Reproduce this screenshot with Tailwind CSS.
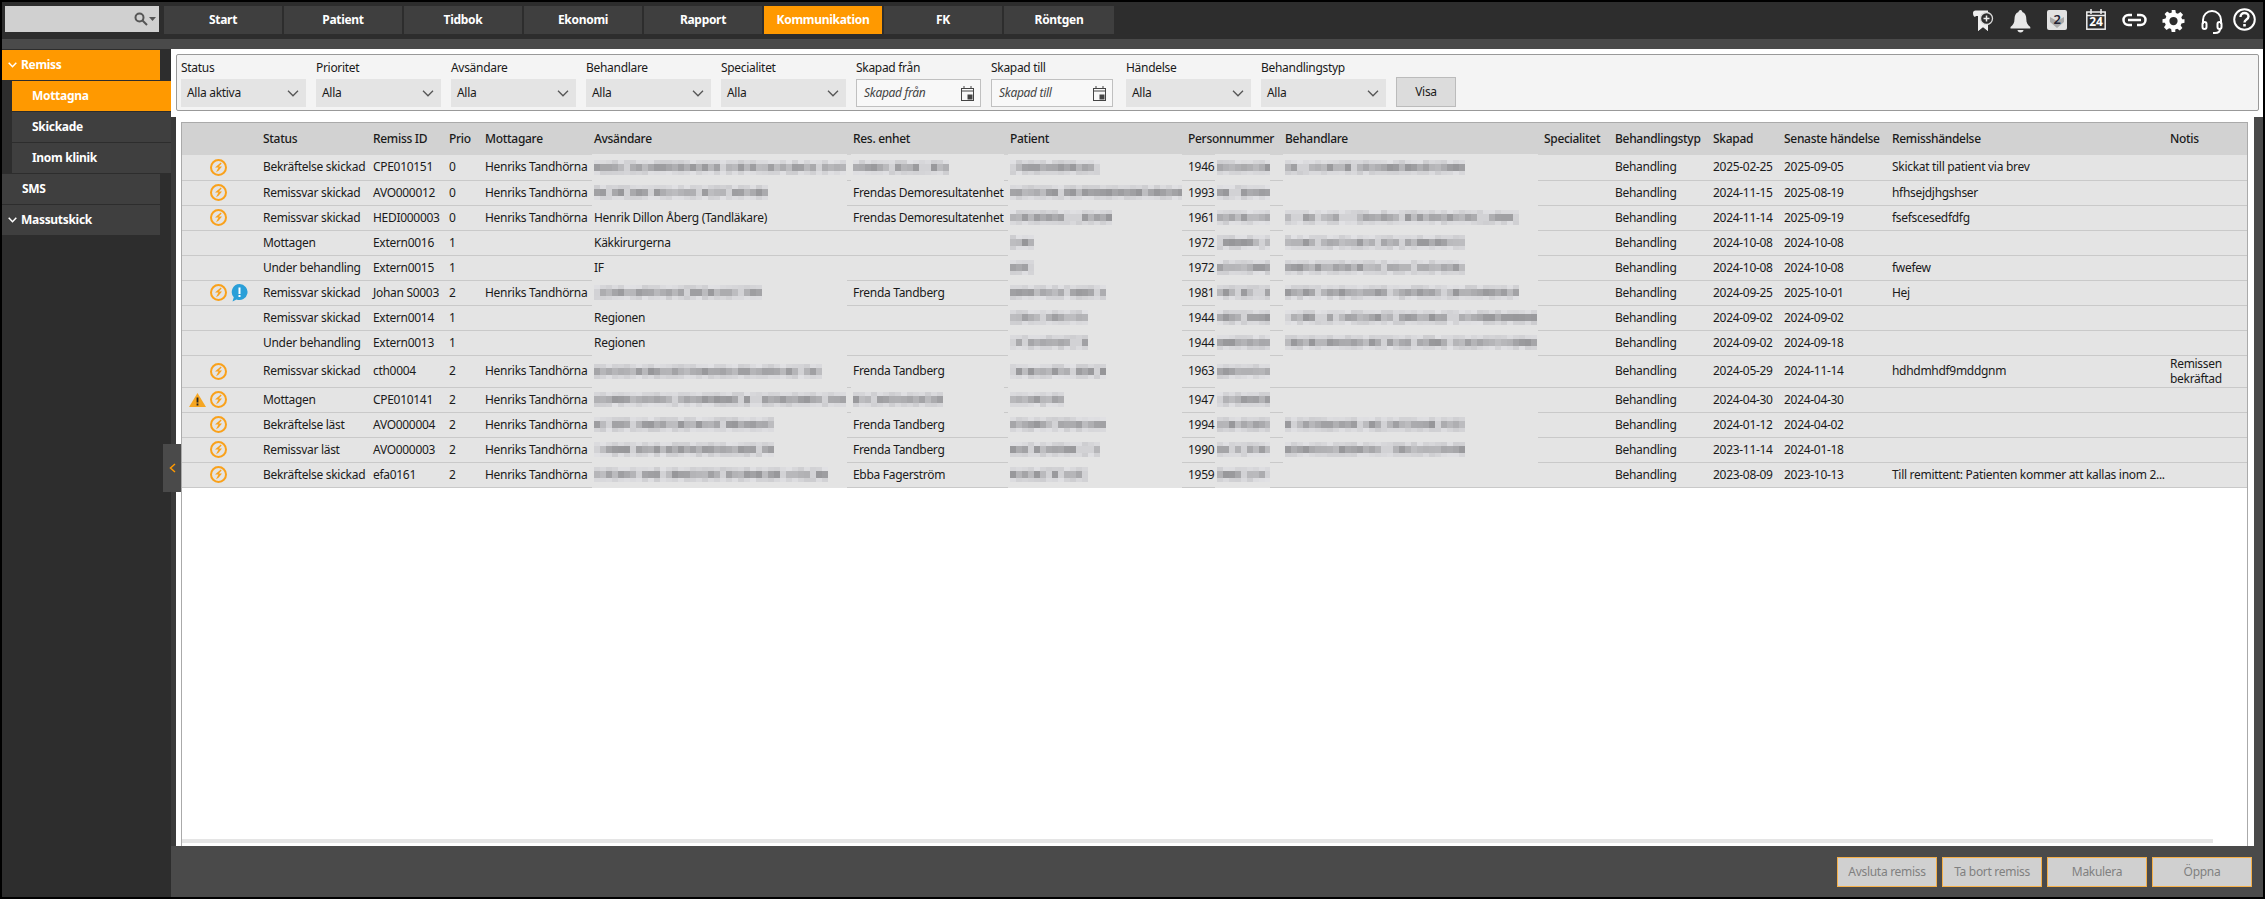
<!DOCTYPE html>
<html lang="sv">

<head>
    <meta charset="UTF-8">
    <title>Remiss - Mottagna</title>
    <script src="https://cdn.jsdelivr.net/npm/@tailwindcss/browser@4"></script>
</head>

<body class="bg-black overflow-hidden">
    <div class="relative h-screen flex flex-col p-[2px] font-['Noto_Sans',sans-serif] text-[12px] tracking-[-0.3px] text-[#1a1a1a]">

        <!-- Top bar -->
        <header class="h-[37px] shrink-0 bg-[#2d2d2d] flex items-start pt-[4px] pl-[3px]">
            <div class="w-[154px] h-[26px] bg-[#d0d0d0] flex items-center justify-end pr-[3px] gap-[1px]">
                <svg width="14" height="14" viewBox="0 0 14 14" fill="none" stroke="#555" stroke-width="2"><circle cx="5.5" cy="5.5" r="4"/><path d="M8.5 8.5l4.5 4.5"/></svg>
                <svg width="7" height="4" viewBox="0 0 7 4" fill="#555"><path d="M0 0h7L3.5 4z"/></svg>
            </div>
            <nav class="flex gap-[2px] ml-[5px] font-bold text-white">
                <a class="w-[118px] h-[28px] bg-[#3f3f3f] flex items-center justify-center">Start</a>
                <a class="w-[118px] h-[28px] bg-[#3f3f3f] flex items-center justify-center">Patient</a>
                <a class="w-[118px] h-[28px] bg-[#3f3f3f] flex items-center justify-center">Tidbok</a>
                <a class="w-[118px] h-[28px] bg-[#3f3f3f] flex items-center justify-center">Ekonomi</a>
                <a class="w-[118px] h-[28px] bg-[#3f3f3f] flex items-center justify-center">Rapport</a>
                <a class="w-[118px] h-[28px] bg-[#ff9900] flex items-center justify-center">Kommunikation</a>
                <a class="w-[118px] h-[28px] bg-[#3f3f3f] flex items-center justify-center">FK</a>
                <a class="w-[110px] h-[28px] bg-[#3f3f3f] flex items-center justify-center">Röntgen</a>
            </nav>
            <!-- Tool icons -->
            <div class="ml-auto flex items-start pr-[7px] text-white">
                <svg class="mt-[4px]" width="21" height="21" viewBox="0 0 21 21"><path d="M0 3c0-1.500 1-2.500 2.500-2.500H15V6H5V21l5-4 5 4V14H5V6H2.500v1C1 7 0 5.500 0 3z" fill="#eee"/><path d="M5 5h10v16l-5-4-5 4z" fill="#eee"/><circle cx="13.500" cy="8.500" r="6" fill="#2d2d2d" stroke="#ddd" stroke-width="1.300"/><path d="M13.500 5.500v6M10.500 8.500h6" stroke="#eee" stroke-width="1.500"/></svg>
                <svg class="ml-[16px] mt-[3px]" width="21" height="24" viewBox="0 0 21 24" fill="#e8e8e8"><path d="M10.5 1c1.2 0 1.8 1 1.8 2 3 1 4 4 4 7 0 4 1.500 6 4 8v1.500H.5V18c2.500-2 4-4 4-8 0-3 1-6 4-7 0-1 .8-2 2-2z"/><path d="M7.500 21h6c0 1.500-1.300 2.500-3 2.500s-3-1-3-2.500z"/></svg>
                <div class="relative ml-[16px] mt-[4px] w-[20px] h-[20px] rounded-[2px] bg-[#e2e2e2] flex items-center justify-center text-[13px] font-semibold text-[#223]">
                    <svg class="absolute inset-0" width="20" height="20" viewBox="0 0 20 20" fill="#aaa"><path d="M3 7l7 4 7-4v5l-7 6-7-6z"/></svg>
                    <span class="relative">2</span>
                </div>
                <div class="ml-[19px] mt-[3px] w-[20px] h-[21px] relative">
                    <svg class="absolute inset-0" width="20" height="21" viewBox="0 0 20 21" fill="none" stroke="#eee" stroke-width="1.5"><rect x=".8" y="3" width="18.400" height="17.200"/><path d="M5 0v5M15 0v5M1 6.500h18" /></svg>
                    <span class="absolute inset-x-0 top-[7px] text-center text-[12px] leading-[12px] font-bold text-white tracking-normal">24</span>
                </div>
                <svg class="ml-[15px] mt-[7px]" width="27" height="14" viewBox="0 0 27 14" fill="none" stroke="#fff" stroke-width="2.500"><path d="M11 2H7.500a5 5 0 0 0 0 10H11M16 2h3.500a5 5 0 0 1 0 10H16"/><path d="M7 7h13"/></svg>
                <svg class="ml-[14px] mt-[4px]" width="23" height="22" viewBox="0 0 24 24" fill="#fff"><path fill-rule="evenodd" d="M10 0h4l.6 3.300 2.200.9 2.800-1.900 2.800 2.800-1.900 2.800.9 2.200L24 10v4l-3.300.6-.9 2.200 1.900 2.800-2.800 2.800-2.800-1.900-2.200.9L14 24h-4l-.6-3.300-2.200-.9-2.800 1.900-2.800-2.800 1.900-2.800-.9-2.200L0 14v-4l3.300-.6.9-2.200-1.900-2.800 2.800-2.800 2.800 1.900 2.200-.9zM12 7.500a4.500 4.500 0 1 0 0 9 4.500 4.500 0 0 0 0-9z"/></svg>
                <svg class="ml-[16px] mt-[4px]" width="22" height="24" viewBox="0 0 22 24" fill="none" stroke="#fff" stroke-width="2"><path d="M2 14V10a9 9 0 0 1 18 0v4"/><rect x="1.500" y="12" width="4" height="7" rx="2"/><rect x="16.500" y="12" width="4" height="7" rx="2"/><path d="M19 19c0 3-2 4-5 4h-2"/></svg>
                <svg class="ml-[10px] mt-[2px]" width="23" height="23" viewBox="0 0 23 23" fill="none" stroke="#fff" stroke-width="2"><circle cx="11.500" cy="11.500" r="10.300"/><path d="M7.500 9c0-2.500 1.800-4 4-4s4 1.500 4 3.500c0 3-4 3-4 6" stroke-width="2.400"/><path d="M11.500 16v2.500" stroke-width="2.600"/></svg>
            </div>
        </header>
        <div class="h-[10px] shrink-0 bg-[#4a4a4a]"></div>

        <div class="flex flex-1 min-h-0">
            <!-- Sidebar -->
            <aside class="w-[169px] shrink-0 bg-[#2d2d2d] pt-[1px] flex flex-col gap-[1px] font-bold text-white">
                <div class="w-[158px] h-[30px] bg-[#ff9900] flex items-center">
                    <svg class="ml-[6px] mr-[4px]" width="9" height="6" viewBox="0 0 9 6" fill="none" stroke="#fff" stroke-width="1.500"><path d="M.7.7l3.800 4 3.800-4"/></svg>Remiss
                </div>
                <div class="ml-[10px] h-[30px] bg-[#ff9900] flex items-center pl-[20px]">Mottagna</div>
                <div class="ml-[10px] h-[30px] bg-[#3f3f3f] flex items-center pl-[20px]">Skickade</div>
                <div class="ml-[10px] h-[30px] bg-[#3f3f3f] flex items-center pl-[20px]">Inom klinik</div>
                <div class="w-[158px] h-[30px] bg-[#3f3f3f] flex items-center pl-[20px]">SMS</div>
                <div class="w-[158px] h-[30px] bg-[#3f3f3f] flex items-center">
                    <svg class="ml-[6px] mr-[4px]" width="9" height="6" viewBox="0 0 9 6" fill="none" stroke="#fff" stroke-width="1.500"><path d="M.7.7l3.800 4 3.800-4"/></svg>Massutskick
                </div>
            </aside>

            <main class="relative flex-1 min-w-0 flex flex-col">
                <!-- Filters -->
                <div class="h-[68px] shrink-0 bg-white pt-[5px] pl-[5px] pr-[4px]">
                    <div id="filters" class="h-[57px] border border-[#999] rounded-[2px] bg-[#f4f4f4] flex pl-[4px] pt-[6px]"></div>
                </div>

                <!-- Table area -->
                <div class="flex flex-1 min-h-0">
                    <div class="w-[5px] shrink-0 bg-[#3a3a3a]"></div>
                    <div class="flex-1 min-w-0 bg-white pt-[5px] pl-[5px] pr-[6px]">
                        <div class="h-full border-x border-t border-[#aaa] flex flex-col">
                            <div class="flex-1 min-h-0">
                                <table class="w-full table-fixed border-collapse">
                                    <colgroup>
                                        <col class="w-[78px]"><col class="w-[110px]"><col class="w-[76px]"><col class="w-[36px]">
                                        <col class="w-[109px]"><col class="w-[259px]"><col class="w-[157px]"><col class="w-[178px]">
                                        <col class="w-[97px]"><col class="w-[259px]"><col class="w-[71px]"><col class="w-[98px]">
                                        <col class="w-[71px]"><col class="w-[108px]"><col class="w-[278px]"><col>
                                    </colgroup>
                                    <thead class="bg-[#d2d2d2]">
                                        <tr class="h-[32px] text-left font-medium">
                                            <th class="font-medium"></th>
                                            <th class="font-medium pl-[3px]">Status</th>
                                            <th class="font-medium pl-[3px]">Remiss ID</th>
                                            <th class="font-medium pl-[3px]">Prio</th>
                                            <th class="font-medium pl-[3px]">Mottagare</th>
                                            <th class="font-medium pl-[3px]">Avsändare</th>
                                            <th class="font-medium pl-[3px]">Res. enhet</th>
                                            <th class="font-medium pl-[3px]">Patient</th>
                                            <th class="font-medium pl-[3px]">Personnummer</th>
                                            <th class="font-medium pl-[3px]">Behandlare</th>
                                            <th class="font-medium pl-[3px]">Specialitet</th>
                                            <th class="font-medium pl-[3px]">Behandlingstyp</th>
                                            <th class="font-medium pl-[3px]">Skapad</th>
                                            <th class="font-medium pl-[3px]">Senaste händelse</th>
                                            <th class="font-medium pl-[3px]">Remisshändelse</th>
                                            <th class="font-medium pl-[3px]">Notis</th>
                                        </tr>
                                    </thead>
                                    <tbody id="rows"></tbody>
                                </table>
                            </div>
                            <div class="h-[4px] w-[2031px] mb-[3px] shrink-0 bg-[#e5e5e5]"></div>
                        </div>
                    </div>
                    <div class="w-[9px] shrink-0 bg-[#4a4a4a]"></div>
                </div>

                <!-- Actions -->
                <footer class="h-[51px] shrink-0 bg-[#4a4a4a] flex justify-end gap-[5px] pt-[11px] pr-[11px] text-[#808080]">
                    <button class="w-[100px] h-[30px] bg-[#d0d0d0] border border-[#f5b04a]">Avsluta remiss</button>
                    <button class="w-[100px] h-[30px] bg-[#d0d0d0] border border-[#f5b04a]">Ta bort remiss</button>
                    <button class="w-[100px] h-[30px] bg-[#d0d0d0] border border-[#f5b04a]">Makulera</button>
                    <button class="w-[100px] h-[30px] bg-[#d0d0d0] border border-[#f5b04a]">Öppna</button>
                </footer>

                <!-- Collapse handle -->
                <div class="absolute left-[-8px] top-[395px] w-[18px] h-[48px] bg-[#4a4a4a] flex items-center justify-center">
                    <svg width="7" height="10" viewBox="0 0 7 10" fill="none" stroke="#ff9900" stroke-width="1.500"><path d="M6 1L1.500 5 6 9"/></svg>
                </div>
            </main>
        </div>
    </div>

    <script>
        const chevron = '<svg width="12" height="7" viewBox="0 0 12 7" fill="none" stroke="#555" stroke-width="1.300"><path d="M1 .8l5 5 5-5"/></svg>';
        const calendar = '<svg width="13" height="15" viewBox="0 0 13 15" fill="none" stroke="#444"><rect x=".5" y="2.500" width="12" height="12"/><path d="M3 0v3M10 0v3M0 5h13" /><rect x="7" y="9" width="4" height="4" fill="#444"/></svg>';

        // Filter bar
        const filters = [
            ['Status', 'Alla aktiva', 125, 10], ['Prioritet', 'Alla', 125, 10], ['Avsändare', 'Alla', 125, 10],
            ['Behandlare', 'Alla', 125, 10], ['Specialitet', 'Alla', 125, 10], ['Skapad från', '', 125, 10],
            ['Skapad till', '', 122, 13], ['Händelse', 'Alla', 125, 10], ['Behandlingstyp', 'Alla', 125, 10]
        ];
        document.getElementById('filters').innerHTML = filters.map(([label, value, width, gap]) => {
            const box = value
                ? `<div class="h-[28px] bg-[#e4e4e4] flex items-center justify-between pl-[6px] pr-[7px]">${value}${chevron}</div>`
                : `<div class="h-[28px] bg-[#f8f8f8] border border-[#c0c0c0] flex items-center justify-between pl-[7px] pr-[6px] italic text-[#444]">${label}${calendar}</div>`;
            return `<div class="shrink-0" style="width:${width}px;margin-right:${gap}px"><div class="h-[18px] leading-[14px]">${label}</div>${box}</div>`;
        }).join('') + '<button class="w-[60px] h-[30px] mt-[16px] bg-[#dcdcdc] border border-[#bbb]">Visa</button>';

        // Pixelated patch for the hidden personal data
        let seed = 7;
        function noise() {
            seed = (seed * 9301 + 49297) % 233280;
            noise.last = seed / 233280;
            return Math.abs(Math.sin(seed * 12.9898) * 43758.5453) % 1;
        }
        function mosaic(width) {
            let cells = '';
            const n = Math.ceil(width / 6);
            for (let i = 0; i < n; i++) {
                const gap = noise() < 0.12;
                const mid = gap ? 210 : 150 + noise() * 40;
                const top = 205 + noise() * 20;
                const bottom = 205 + noise() * 20;
                [[0, 4, top], [4, 7, mid], [11, 4, bottom]].forEach(([y, h, g]) => {
                    const c = Math.round(g);
                    cells += `<rect x="${i * 6}" y="${y}" width="6" height="${h}" fill="rgb(${c},${c},${c + 3})"/>`;
                });
            }
            return `<svg class="block" width="${n * 6}" height="15">${cells}</svg>`;
        }
        // patch keeps the cell colour over the row line, like the original
        function hidden(width, left, right) {
            return `<div class="absolute inset-y-[-1px] bg-[#e4e4e4] flex items-center z-10" style="left:${left}px;right:${right}px;padding-left:2px">${mosaic(width)}</div>`;
        }

        const bolt = '<svg class="block shrink-0" width="17" height="17" viewBox="0 0 17 17"><circle cx="8.500" cy="8.500" r="7.500" fill="none" stroke="#f9a11b" stroke-width="2"/><path d="M10.800 3.500L5 8.500h3.500L6 13.200l2.500-1.500 3.500-4.200H8.800l2.800-3z" fill="#f9a11b"/></svg>';
        const note = '<svg class="block shrink-0" width="17" height="18" viewBox="0 0 17 18"><path d="M8.500 0a8 8 0 1 1-3 15.400L1.500 17.500l1.300-4.200A8 8 0 0 1 8.500 0z" fill="#2a9fd8"/><path d="M8.500 3.500v6.500M8.500 11v2" stroke="#fff" stroke-width="2"/></svg>';
        const warn = '<svg class="block shrink-0" width="17" height="14" viewBox="0 0 17 14"><path d="M8.500 0L17 14H0z" fill="#f5a623"/><path d="M8.500 4.500v5M8.500 10.500v2" stroke="#222" stroke-width="1.800"/></svg>';

        // status, id, prio, mottagare, avsändare, enhet, patient, pnr, behandlare, skapad, senaste, händelse, notis, flags
        // a number means a pixelated patch of that width
        const H = 'Henriks Tandhörna', FD = 'Frendas Demoresultatenhet', FT = 'Frenda Tandberg';
        const data = [
            ['Bekräftelse skickad', 'CPE010151', '0', H, 250, 91, 85, '1946', 178, '2025-02-25', '2025-09-05', 'Skickat till patient via brev', '', 'b'],
            ['Remissvar skickad', 'AVO000012', '0', H, 174, FD, 170, '1993', 0, '2024-11-15', '2025-08-19', 'hfhsejdjhgshser', '', 'b'],
            ['Remissvar skickad', 'HEDI000003', '0', H, 'Henrik Dillon Åberg (Tandläkare)', FD, 100, '1961', 230, '2024-11-14', '2025-09-19', 'fsefscesedfdfg', '', 'b'],
            ['Mottagen', 'Extern0016', '1', '', 'Käkkirurgerna', '', 20, '1972', 175, '2024-10-08', '2024-10-08', '', '', ''],
            ['Under behandling', 'Extern0015', '1', '', 'IF', '', 20, '1972', 175, '2024-10-08', '2024-10-08', 'fwefew', '', ''],
            ['Remissvar skickad', 'Johan S0003', '2', H, 164, FT, 96, '1981', 230, '2024-09-25', '2025-10-01', 'Hej', '', 'bn'],
            ['Remissvar skickad', 'Extern0014', '1', '', 'Regionen', '', 75, '1944', 250, '2024-09-02', '2024-09-02', '', '', ''],
            ['Under behandling', 'Extern0013', '1', '', 'Regionen', '', 75, '1944', 250, '2024-09-02', '2024-09-18', '', '', ''],
            ['Remissvar skickad', 'cth0004', '2', H, 225, FT, 96, '1963', 0, '2024-05-29', '2024-11-14', 'hdhdmhdf9mddgnm', 'Remissen bekräftad', 'b'],
            ['Mottagen', 'CPE010141', '2', H, 250, 90, 50, '1947', 0, '2024-04-30', '2024-04-30', '', '', 'wb'],
            ['Bekräftelse läst', 'AVO000004', '2', H, 175, FT, 96, '1994', 175, '2024-01-12', '2024-04-02', '', '', 'b'],
            ['Remissvar läst', 'AVO000003', '2', H, 175, FT, 85, '1990', 175, '2023-11-14', '2024-01-18', '', '', 'b'],
            ['Bekräftelse skickad', 'efa0161', '2', H, 230, 'Ebba Fagerström', 75, '1959', 0, '2023-08-09', '2023-10-13', 'Till remittent: Patienten kommer att kallas inom 2...', '', 'b']
        ];

        function cell(value) {
            return typeof value === 'number'
                ? `<td class="relative">${value ? hidden(value, 1, 3) : ''}</td>`
                : `<td class="pl-[3px] whitespace-nowrap overflow-hidden">${value}</td>`;
        }

        document.getElementById('rows').innerHTML = data.map((r) => {
            const [status, id, prio, to, from, unit, patient, pnr, vet, created, last, event, notis, flags] = r;
            const icons = `<div class="flex items-center h-full relative">
                <div class="w-[18px] ml-[6px] flex justify-center">${flags.includes('w') ? warn : ''}</div>
                <div class="w-[17px] ml-[4px]">${flags.includes('b') ? bolt : ''}</div>
                <div class="w-[17px] ml-[4px]">${flags.includes('n') ? note : ''}</div>
            </div>`;
            const tall = notis ? 'h-[32px]' : 'h-[25px]';
            return `<tr class="${tall} bg-[#e4e4e4] border-b border-[#c9c9c9]">
                <td>${icons}</td>
                ${cell(status)}${cell(id)}${cell(prio)}${cell(to)}${cell(from)}${cell(unit)}${cell(patient)}
                <td class="relative pl-[3px]">${pnr}${hidden(52, 30, 12)}</td>
                ${cell(vet)}<td></td>${cell('Behandling')}${cell(created)}${cell(last)}${cell(event)}
                <td class="pl-[3px] leading-[15px]">${notis}</td>
            </tr>`;
        }).join('');
    </script>
</body>

</html>
